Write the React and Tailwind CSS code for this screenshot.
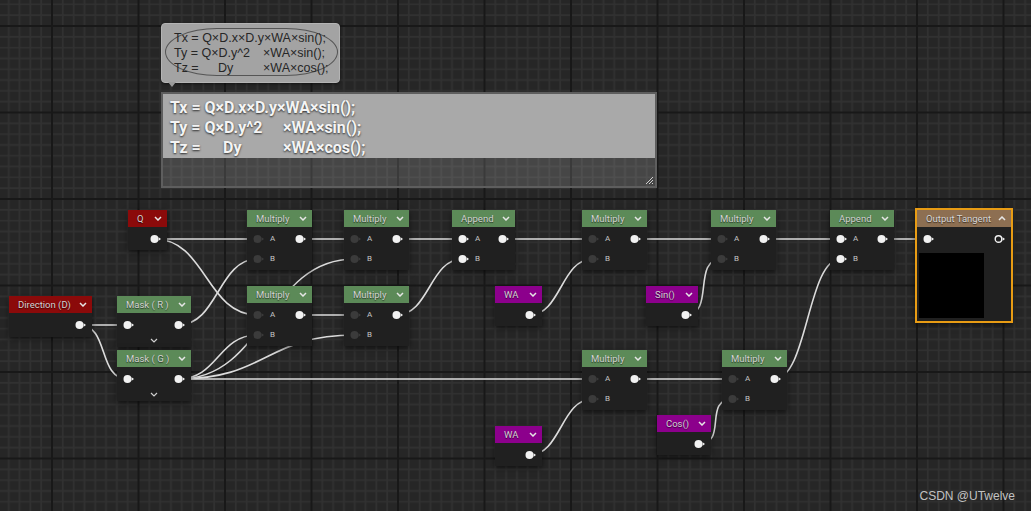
import React from "react";

// node graph data: x/y/w are used for the wires, pos holds the same numbers as classes
const GREEN = "bg-[#5c8a58]";
const RED = "bg-[#8b0a0a]";
const PURPLE = "bg-[#8c008c]";

const nodes = {
  q: { x: 128, y: 210, w: 39, pos: "left-[128px] top-[210px] w-[39px]", head: RED, title: "Q" },
  dir: { x: 9, y: 296, w: 83, pos: "left-[9px] top-[296px] w-[83px]", head: RED, title: "Direction (D)", pb: true },
  maskR: { x: 117, y: 296, w: 74, pos: "left-[117px] top-[296px] w-[74px]", head: GREEN, title: "Mask ( R )", inputs: [{ label: "", on: true }], more: true },
  maskG: { x: 117, y: 350, w: 74, pos: "left-[117px] top-[350px] w-[74px]", head: GREEN, title: "Mask ( G )", inputs: [{ label: "", on: true }], more: true },
  m1: { x: 247, y: 210, w: 65, pos: "left-[247px] top-[210px] w-[65px]", head: GREEN, title: "Multiply", inputs: [{ label: "A" }, { label: "B" }] },
  m2: { x: 247, y: 286, w: 65, pos: "left-[247px] top-[286px] w-[65px]", head: GREEN, title: "Multiply", inputs: [{ label: "A" }, { label: "B" }] },
  m3: { x: 344, y: 210, w: 65, pos: "left-[344px] top-[210px] w-[65px]", head: GREEN, title: "Multiply", inputs: [{ label: "A" }, { label: "B" }] },
  m4: { x: 344, y: 286, w: 65, pos: "left-[344px] top-[286px] w-[65px]", head: GREEN, title: "Multiply", inputs: [{ label: "A" }, { label: "B" }] },
  ap1: { x: 452, y: 210, w: 63, pos: "left-[452px] top-[210px] w-[63px]", head: GREEN, title: "Append", inputs: [{ label: "A", on: true }, { label: "B", on: true }] },
  wa1: { x: 495, y: 286, w: 47, pos: "left-[495px] top-[286px] w-[47px]", head: PURPLE, title: "WA" },
  m5: { x: 582, y: 210, w: 65, pos: "left-[582px] top-[210px] w-[65px]", head: GREEN, title: "Multiply", inputs: [{ label: "A" }, { label: "B" }] },
  sin: { x: 646, y: 286, w: 52, pos: "left-[646px] top-[286px] w-[52px]", head: PURPLE, title: "Sin()" },
  m6: { x: 711, y: 210, w: 65, pos: "left-[711px] top-[210px] w-[65px]", head: GREEN, title: "Multiply", inputs: [{ label: "A" }, { label: "B" }] },
  ap2: { x: 830, y: 210, w: 64, pos: "left-[830px] top-[210px] w-[64px]", head: GREEN, title: "Append", inputs: [{ label: "A", on: true }, { label: "B", on: true }] },
  m7: { x: 582, y: 350, w: 65, pos: "left-[582px] top-[350px] w-[65px]", head: GREEN, title: "Multiply", inputs: [{ label: "A" }, { label: "B" }] },
  m8: { x: 722, y: 350, w: 65, pos: "left-[722px] top-[350px] w-[65px]", head: GREEN, title: "Multiply", inputs: [{ label: "A" }, { label: "B" }] },
  wa2: { x: 495, y: 426, w: 47, pos: "left-[495px] top-[426px] w-[47px]", head: PURPLE, title: "WA" },
  cos: { x: 657, y: 415, w: 54, pos: "left-[657px] top-[415px] w-[54px]", head: PURPLE, title: "Cos()" },
};

// output tangent pin (inside the 2px border)
const outIn = { x: 927.5, y: 239 };

const outPin = (n) => ({ x: n.x + n.w - 12.5, y: n.y + 29 });
const inPin = (n, i) => ({ x: n.x + 10.5, y: n.y + 29 + 20 * i });

const links = [
  [outPin(nodes.q), inPin(nodes.m1, 0)],
  [outPin(nodes.q), inPin(nodes.m2, 0)],
  [outPin(nodes.dir), inPin(nodes.maskR, 0)],
  [outPin(nodes.dir), inPin(nodes.maskG, 0)],
  [outPin(nodes.maskR), inPin(nodes.m1, 1)],
  [outPin(nodes.maskG), inPin(nodes.m2, 1)],
  [outPin(nodes.maskG), inPin(nodes.m3, 1)],
  [outPin(nodes.maskG), inPin(nodes.m4, 1)],
  [outPin(nodes.maskG), inPin(nodes.m7, 0)],
  [outPin(nodes.m1), inPin(nodes.m3, 0)],
  [outPin(nodes.m2), inPin(nodes.m4, 0)],
  [outPin(nodes.m3), inPin(nodes.ap1, 0)],
  [outPin(nodes.m4), inPin(nodes.ap1, 1)],
  [outPin(nodes.ap1), inPin(nodes.m5, 0)],
  [outPin(nodes.wa1), inPin(nodes.m5, 1)],
  [outPin(nodes.m5), inPin(nodes.m6, 0)],
  [outPin(nodes.sin), inPin(nodes.m6, 1)],
  [outPin(nodes.m6), inPin(nodes.ap2, 0)],
  [outPin(nodes.ap2), outIn],
  [outPin(nodes.wa2), inPin(nodes.m7, 1)],
  [outPin(nodes.m7), inPin(nodes.m8, 0)],
  [outPin(nodes.cos), inPin(nodes.m8, 1)],
  [outPin(nodes.m8), inPin(nodes.ap2, 1)],
];

const wirePath = ([a, b]) => {
  const d = Math.max(Math.abs(b.x - a.x) * 0.5, 30);
  return `M${a.x} ${a.y} C${a.x + d} ${a.y} ${b.x - d} ${b.y} ${b.x} ${b.y}`;
};

const Pin = ({ on = true, hollow = false }) => {
  const c = on ? "#f2f2f2" : "#3b3b3b";
  return (
    <svg width="12" height="10" viewBox="0 0 12 10" className="shrink-0">
      {hollow ? (
        <circle cx="4.5" cy="5" r="3.3" fill="none" stroke={c} strokeWidth="1.4" />
      ) : (
        <circle cx="4.5" cy="5" r="4" fill={c} />
      )}
      <path d="M8.6 3.2 L11 5 L8.6 6.8 Z" fill={c} />
    </svg>
  );
};

const Chevron = ({ up = false }) => (
  <svg width="8" height="5" viewBox="0 0 8 5" className="shrink-0">
    <path d={up ? "M1 4 L4 1 L7 4" : "M1 1 L4 4 L7 1"} fill="none" stroke="#e6e6e6" strokeWidth="1.5" />
  </svg>
);

const Node = ({ n }) => {
  const inputs = n.inputs || [];
  return (
    <div className={`absolute ${n.pos} bg-[#202020] shadow-[0_2px_6px_rgba(0,0,0,0.55)]`}>
      <div className={`h-[17px] flex items-center justify-between pl-[9px] pr-[5px] ${n.head}`}>
        <span className="text-[9.5px] leading-none text-[#d2d2d2] whitespace-nowrap [text-shadow:0_1px_1px_rgba(0,0,0,0.6)]">
          {n.title}
        </span>
        <Chevron />
      </div>
      <div className={`pt-[2px] ${n.pb ? "pb-[2px]" : "pb-[1px]"}`}>
        {inputs.length === 0 && (
          <div className="h-[20px] flex items-center justify-end pr-[5px]">
            <Pin />
          </div>
        )}
        {inputs.map((p, i) => (
          <div key={i} className="h-[20px] flex items-center justify-between pl-[6px] pr-[5px]">
            <div className="flex items-center gap-[5px]">
              <Pin on={!!p.on} />
              <span className="text-[8px] leading-none text-[#c4c4c4]">{p.label}</span>
            </div>
            {i === 0 && <Pin />}
          </div>
        ))}
        {n.more && (
          <div className="h-[11px] flex items-center justify-center">
            <svg width="8" height="5" viewBox="0 0 8 5">
              <path d="M1 1 L4 4 L7 1" fill="none" stroke="#cfcfcf" strokeWidth="1.2" />
            </svg>
          </div>
        )}
      </div>
    </div>
  );
};

const minor = [1, 2, 3, 4, 5, 6, 7].map((i) => i * 10.8125);

export default function App() {
  return (
    <div className="relative w-[1031px] h-[511px] overflow-hidden bg-[#262626] font-['Roboto','Liberation_Sans',sans-serif]">
      {/* canvas grid */}
      <svg className="absolute inset-0" width="1031" height="511">
        <defs>
          <pattern id="grid" x="51" y="25" width="86.5" height="86.5" patternUnits="userSpaceOnUse">
            <rect width="86.5" height="86.5" fill="#262626" />
            {minor.map((p) => (
              <g key={p}>
                <line x1={p + 1} y1="0" x2={p + 1} y2="86.5" stroke="#313131" strokeWidth="1.7" />
                <line x1="0" y1={p + 1} x2="86.5" y2={p + 1} stroke="#313131" strokeWidth="1.7" />
              </g>
            ))}
            <line x1="1" y1="0" x2="1" y2="86.5" stroke="#181818" strokeWidth="2" />
            <line x1="0" y1="1" x2="86.5" y2="1" stroke="#181818" strokeWidth="2" />
          </pattern>
        </defs>
        <rect width="1031" height="511" fill="url(#grid)" />
      </svg>

      {/* wires */}
      <svg className="absolute inset-0" width="1031" height="511">
        {links.map((l, i) => (
          <path key={i} d={wirePath(l)} fill="none" stroke="#dcdcdc" strokeWidth="1.6" />
        ))}
      </svg>

      {/* comment bubble */}
      <div className="absolute left-[161px] top-[23px] w-[179px] h-[60px] rounded-[4px] bg-[#a3a3a3] border border-[#b4b4b4] shadow-[0_1px_3px_rgba(0,0,0,0.5)] font-['Liberation_Sans',sans-serif] text-[12.5px] leading-[15px] text-[#262626]">
        <div className="absolute left-[3px] top-[4px] w-[173px] h-[48px] rounded-[30%/50%] border border-[#555555]" />
        <div className="absolute left-[12px] top-[7px] whitespace-nowrap">
          <div>Tx = Q×D.x×D.y×WA×sin();</div>
          <div className="flex">
            <span className="w-[89px]">Ty = Q×D.y^2</span>
            <span>×WA×sin();</span>
          </div>
          <div className="flex">
            <span className="w-[44px]">Tz =</span>
            <span className="w-[45px]">Dy</span>
            <span>×WA×cos();</span>
          </div>
        </div>
      </div>
      <svg className="absolute left-[168px] top-[82px]" width="8" height="5" viewBox="0 0 8 5">
        <path d="M0 0 L8 0 L4 5 Z" fill="#9a9a9a" />
      </svg>

      {/* comment box */}
      <div className="absolute left-[161px] top-[92px] w-[496px] h-[96px] border-2 border-[#5e5e5e] bg-white/15 flex flex-col">
        <div className="h-[64px] bg-[#a9a9a9] pl-[7px] pt-[4px] text-[16px] leading-[20px] font-bold text-[#f4f4f4] whitespace-nowrap [text-shadow:0_1px_2px_rgba(0,0,0,0.75)]">
          <div>Tx = Q×D.x×D.y×WA×sin();</div>
          <div className="flex">
            <span className="w-[113px]">Ty = Q×D.y^2</span>
            <span>×WA×sin();</span>
          </div>
          <div className="flex">
            <span className="w-[53px]">Tz =</span>
            <span className="w-[60px]">Dy</span>
            <span>×WA×cos();</span>
          </div>
        </div>
        <div className="flex-1 flex items-end justify-end pr-[1px] pb-[1px]">
          <svg width="9" height="9" viewBox="0 0 9 9">
            <path d="M8 1 L1 8 M8 4 L4 8 M8 7 L7 8" stroke="#d0d0d0" strokeWidth="1" />
          </svg>
        </div>
      </div>

      {/* nodes */}
      {Object.entries(nodes).map(([k, n]) => (
        <Node key={k} n={n} />
      ))}

      {/* output node */}
      <div className="absolute left-[915px] top-[208px] w-[98px] h-[115px] border-2 border-[#e89c14] bg-[#202020] shadow-[0_2px_6px_rgba(0,0,0,0.55)]">
        <div className="h-[17px] flex items-center justify-between pl-[9px] pr-[5px] bg-[#8d6f52]">
          <span className="text-[9.5px] leading-none text-[#d6d6d6] whitespace-nowrap [text-shadow:0_1px_1px_rgba(0,0,0,0.6)]">
            Output Tangent
          </span>
          <Chevron up />
        </div>
        <div className="pt-[2px]">
          <div className="h-[20px] flex items-center justify-between pl-[6px] pr-[5px]">
            <Pin />
            <Pin hollow />
          </div>
          <div className="ml-[2px] mt-[4px] w-[65px] h-[65px] bg-black" />
        </div>
      </div>

      {/* watermark */}
      <div className="absolute right-[16px] bottom-[6px] font-['Liberation_Sans',sans-serif] text-[12px] text-[#c2c2c2]">
        CSDN @UTwelve
      </div>
    </div>
  );
}
